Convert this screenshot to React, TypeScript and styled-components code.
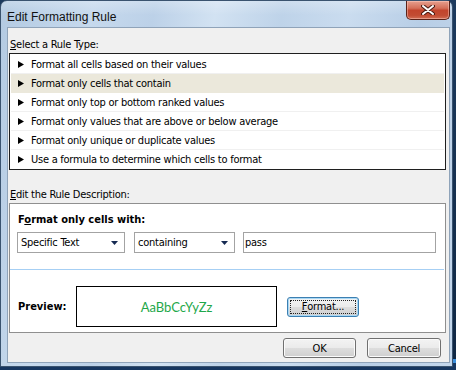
import React from 'react';
import styled, { createGlobalStyle } from 'styled-components';

const GlobalStyle = createGlobalStyle`
  html, body {
    margin: 0;
    padding: 0;
  }
  body {
    width: 456px;
    height: 370px;
    overflow: hidden;
    background: linear-gradient(180deg, #1c3a5e 0%, #0f2744 97%, #3b8fdc 97%, #3b8fdc 98%, #163660 98%);
    font-family: "DejaVu Sans Condensed", "DejaVu Sans", sans-serif;
    font-size: 11px;
    letter-spacing: -0.25px;
    color: #000;
  }
`;

const Window = styled.div`
  box-sizing: border-box;
  width: 453px;
  height: 367px;
  display: flex;
  flex-direction: column;
  border: 1px solid #3a536f;
  border-radius: 7px 7px 0 0;
  background:
    linear-gradient(180deg, rgba(255, 255, 255, 0.25) 0px, rgba(255, 255, 255, 0) 14px),
    linear-gradient(100deg, #b3cae2 0%, #c6d9ed 18%, #bcd1e8 30%, #d2e2f2 42%, #bed3e9 55%, #cadcef 68%, #b8cee6 82%, #c4d7ec 100%);
`;

const TitleBar = styled.div`
  height: 26px;
  display: flex;
  justify-content: space-between;
  align-items: flex-start;
  padding-left: 6px;
`;

const Title = styled.span`
  font-family: "Liberation Sans", "Noto Sans", sans-serif;
  font-size: 12px;
  letter-spacing: 0;
  line-height: 14px;
  margin-top: 9px;
  color: #111;
`;

const CloseButton = styled.div`
  box-sizing: border-box;
  width: 44px;
  height: 19px;
  margin-right: 2px;
  display: flex;
  align-items: center;
  justify-content: center;
  border: 1px solid #5a2218;
  border-top: none;
  border-radius: 0 0 5px 5px;
  background: linear-gradient(180deg, #e6a08f 0%, #d46f59 40%, #c2442c 52%, #c24c33 80%, #d26e55 100%);
  box-shadow: inset 0 0 0 1px rgba(255, 210, 200, 0.45);
`;

const Frame = styled.div`
  flex: 1;
  display: flex;
  padding: 0 2px 3px 6px;
`;

const Client = styled.div`
  flex: 1;
  display: flex;
  flex-direction: column;
  background: #f0f0f0;
  border: 1px solid #8fa3b9;
  padding: 10px 0 0 0;
`;

const SectionLabel = styled.div<{ gap?: number }>`
  line-height: 14px;
  padding-left: 2px;
  margin-top: ${p => p.gap ?? 0}px;
`;

const Key = styled.span`
  text-decoration: underline;
`;

const ListBox = styled.div`
  width: 437px;
  box-sizing: border-box;
  margin: 1px 0 0 1px;
  border: 1px solid #1f1f1f;
  background: #fff;
  padding: 1px 1px 0 1px;
`;

const RuleRow = styled.div<{ selected?: boolean }>`
  box-sizing: border-box;
  height: 19px;
  display: flex;
  align-items: center;
  gap: 7px;
  padding-left: 7px;
  background: ${p => (p.selected ? '#ebe8db' : '#fff')};
  border-bottom: 1px solid ${p => (p.selected ? '#ebe8db' : '#f0f0f0')};
  &:last-child {
    border-bottom-color: #fff;
  }
`;

const DescBox = styled.div`
  width: 437px;
  height: 130px;
  box-sizing: border-box;
  margin: 1px 0 0 1px;
  border: 1px solid #8f8f8f;
  background: #fff;
  display: flex;
  flex-direction: column;
  padding-top: 9px;
`;

const Heading = styled.div`
  font-weight: bold;
  letter-spacing: 0;
  line-height: 14px;
  padding-left: 8px;
`;

const FieldRow = styled.div`
  display: flex;
  margin-top: 5px;
  padding-left: 7px;
`;

const Combo = styled.div<{ w: number; gap?: number }>`
  box-sizing: border-box;
  width: ${p => p.w}px;
  height: 21px;
  margin-right: ${p => p.gap ?? 0}px;
  border: 1px solid #a3a3a3;
  background: #fff;
  display: flex;
  align-items: center;
  justify-content: space-between;
  padding: 0 6px 0 3px;
`;

const TextField = styled.div`
  box-sizing: border-box;
  width: 193px;
  height: 21px;
  border: 1px solid #a3a3a3;
  background: #fff;
  display: flex;
  align-items: center;
  padding-left: 1px;
`;

const Separator = styled.div`
  height: 1px;
  background: #a6cff4;
  margin: 16px 1px 0 0;
`;

const PreviewRow = styled.div`
  display: flex;
  align-items: center;
  margin-top: 16px;
  padding-left: 8px;
`;

const PreviewLabel = styled.span`
  font-weight: bold;
  letter-spacing: 0;
  width: 58px;
`;

const PreviewBox = styled.div`
  box-sizing: border-box;
  width: 201px;
  height: 41px;
  border: 1px solid #000;
  display: flex;
  align-items: center;
  justify-content: center;
  margin-right: 10px;
  font-family: Lato, "Open Sans", sans-serif;
  font-size: 13px;
  letter-spacing: 0;
  color: #1fa84a;
`;

const Button = styled.div<{ w: number; focused?: boolean }>`
  box-sizing: border-box;
  width: ${p => p.w}px;
  height: 20px;
  border: 1px solid ${p => (p.focused ? '#3c7fb1' : '#707070')};
  border-radius: 3px;
  background: linear-gradient(180deg, #f3f3f3 0%, #ebebeb 48%, #dddddd 52%, #cfcfcf 100%);
  box-shadow: inset 0 0 0 1px ${p => (p.focused ? '#a9d8f5' : '#fbfbfb')};
  display: flex;
  align-items: center;
  justify-content: center;
  padding: 2px;
`;

const FocusRing = styled.span`
  flex: 1;
  align-self: stretch;
  display: flex;
  align-items: center;
  justify-content: center;
  border: 1px dotted #222;
`;

const Footer = styled.div`
  display: flex;
  justify-content: flex-end;
  gap: 11px;
  margin-top: 5px;
  padding-right: 8px;
`;

const rules = [
  'Format all cells based on their values',
  'Format only cells that contain',
  'Format only top or bottom ranked values',
  'Format only values that are above or below average',
  'Format only unique or duplicate values',
  'Use a formula to determine which cells to format',
];

const Pointer = () => (
  <svg width="6" height="7" viewBox="0 0 6 7">
    <polygon points="0,0 6,3.5 0,7" fill="#000" />
  </svg>
);

const DropArrow = () => (
  <svg width="7" height="4" viewBox="0 0 7 4">
    <polygon points="0,0 7,0 3.5,4" fill="#152a52" />
  </svg>
);

const CloseGlyph = () => (
  <svg width="14" height="10" viewBox="0 0 14 10">
    <path d="M2 1 L12 9 M12 1 L2 9" stroke="#4a1a12" strokeWidth="4" strokeLinecap="round" />
    <path d="M2 1 L12 9 M12 1 L2 9" stroke="#fff" strokeWidth="2" strokeLinecap="round" />
  </svg>
);

const App: React.FC = () => {
  return (
    <>
      <GlobalStyle />
      <Window>
        <TitleBar>
          <Title>Edit Formatting Rule</Title>
          <CloseButton>
            <CloseGlyph />
          </CloseButton>
        </TitleBar>
        <Frame>
          <Client>
            <SectionLabel>
              <Key>S</Key>elect a Rule Type:
            </SectionLabel>
            <ListBox>
              {rules.map((rule, i) => (
                <RuleRow key={rule} selected={i === 1}>
                  <Pointer />
                  <span>{rule}</span>
                </RuleRow>
              ))}
            </ListBox>

            <SectionLabel gap={18}>
              <Key>E</Key>dit the Rule Description:
            </SectionLabel>
            <DescBox>
              <Heading>
                F<Key>o</Key>rmat only cells with:
              </Heading>
              <FieldRow>
                <Combo w={108} gap={9}>
                  <span>Specific Text</span>
                  <DropArrow />
                </Combo>
                <Combo w={101} gap={8}>
                  <span>containing</span>
                  <DropArrow />
                </Combo>
                <TextField>pass</TextField>
              </FieldRow>
              <Separator />
              <PreviewRow>
                <PreviewLabel>Preview:</PreviewLabel>
                <PreviewBox>AaBbCcYyZz</PreviewBox>
                <Button w={72} focused>
                  <FocusRing>
                    <Key>F</Key>ormat...
                  </FocusRing>
                </Button>
              </PreviewRow>
            </DescBox>

            <Footer>
              <Button w={73}>OK</Button>
              <Button w={74}>Cancel</Button>
            </Footer>
          </Client>
        </Frame>
      </Window>
    </>
  );
};

export default App;
